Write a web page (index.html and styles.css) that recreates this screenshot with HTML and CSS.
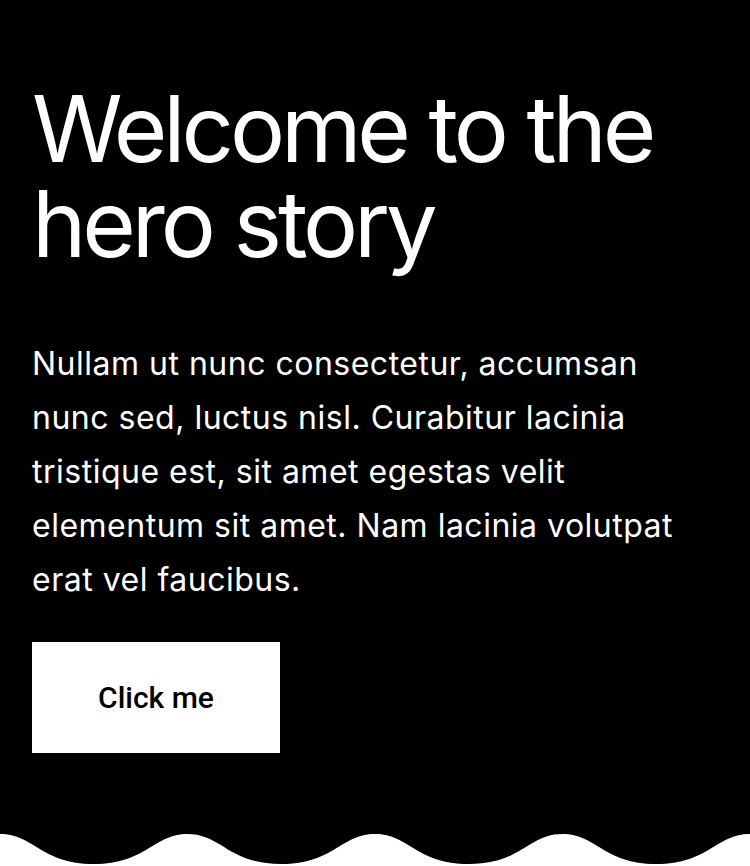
FILE: index.html
```html
<!DOCTYPE html>
<html lang="en">
<head>
<meta charset="utf-8">
<title>Hero story</title>
<link rel="stylesheet" href="styles.css">
</head>
<body>
<section class="hero">
  <h1 class="hero-title">Welcome to the hero story</h1>
  <p class="hero-text">Nullam ut nunc consectetur, accumsan nunc sed, luctus nisl. Curabitur lacinia tristique est, sit amet egestas velit elementum sit amet. Nam lacinia volutpat erat vel faucibus.</p>
  <a class="hero-button" href="#">Click me</a>
</section>
<svg class="wave" viewBox="0 0 750 32" preserveAspectRatio="none" aria-hidden="true">
  <path d="M0 0 H750 V0 C715.9 0 709.1 30 656.25 30 C603.4 30 596.6 0 562.5 0 C528.4 0 521.6 30 468.75 30 C415.9 30 409.1 0 375 0 C340.9 0 334.1 30 281.25 30 C228.4 30 221.6 0 187.5 0 C153.4 0 146.6 30 93.75 30 C40.9 30 34.1 0 0 0 Z" fill="#000"/>
</svg>
</body>
</html>
```
FILE: styles.css
```css
html, body {
  margin: 0;
  padding: 0;
  background: #fff;
}

.hero {
  background: #000;
  color: #fff;
  padding: 81px 32px 81px 32px;
  display: flex;
  flex-direction: column;
  align-items: flex-start;
}

.hero-title {
  margin: 0;
  font-family: "Inter", "Liberation Sans", sans-serif;
  font-weight: 400;
  font-size: 92px;
  line-height: 95px;
  letter-spacing: -0.045em;
  max-width: 660px;
}

.hero-text {
  margin: 66px 0 0 0;
  font-family: "Inter", "Liberation Sans", sans-serif;
  font-size: 32px;
  line-height: 54px;
  letter-spacing: 0.5px;
  max-width: 660px;
}

.hero-button {
  margin-top: 35px;
  width: 248px;
  height: 111px;
  background: #fff;
  color: #000;
  text-decoration: none;
  display: flex;
  align-items: center;
  justify-content: center;
  font-family: "Roboto", "Liberation Sans", sans-serif;
  font-weight: 500;
  font-size: 30px;
}

.wave {
  display: block;
  width: 100%;
  height: 32px;
}
```
